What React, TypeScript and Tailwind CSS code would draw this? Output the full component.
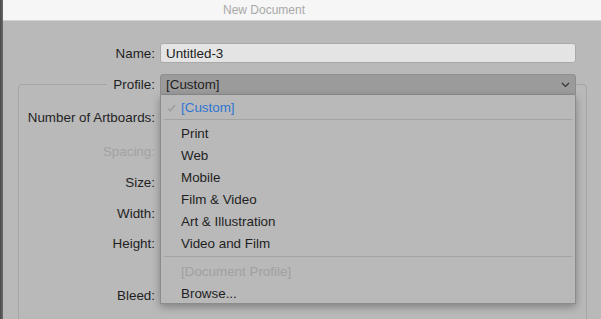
import React from 'react';

const menuItems = ['Print', 'Web', 'Mobile', 'Film & Video', 'Art & Illustration', 'Video and Film'];

const boxRows: { label: string; mt: string; disabled?: boolean }[] = [
  { label: 'Number of Artboards:', mt: 'mt-[22px]' },
  { label: 'Spacing:', mt: 'mt-[14px]', disabled: true },
  { label: 'Size:', mt: 'mt-[11px]' },
  { label: 'Width:', mt: 'mt-[11px]' },
  { label: 'Height:', mt: 'mt-[10px]' },
  { label: 'Bleed:', mt: 'mt-[32px]' },
];

const App: React.FC = () => {
  return (
    <div className="w-[601px] h-[319px] overflow-hidden flex bg-[#b9b9b9] font-['Liberation_Sans',Arial,sans-serif] text-[13.4px] text-[#1f1f1f]">
      {/* window edge */}
      <div className="w-[3px] shrink-0 bg-gradient-to-r from-[#4a4a4a] to-[#6a6a6a]" />

      <div className="flex-1 flex flex-col relative">
        {/* title bar */}
        <div className="h-[21px] shrink-0 bg-[#f6f6f6] border-b border-[#d2d2d2] pl-[220px] text-[12px] leading-[20px] text-[#a8a8a8]">
          New Document
        </div>

        <div className="pt-[22px] flex flex-col">
          {/* Name */}
          <div className="flex items-center h-[20px]">
            <div className="w-[152px] text-right pt-[2px]">Name:</div>
            <div className="ml-[5px] w-[416px] h-[20px] bg-[#e4e4e4] border border-[#a9a9a9] rounded-[3px] pl-[5px] pt-[1px] leading-[18px] text-[#1c1c1c]">
              Untitled-3
            </div>
          </div>

          {/* Profile */}
          <div className="relative z-10 flex items-center h-[21px] mt-[11px]">
            <div className="w-[157px] text-right pt-[1px]">
              <span className="bg-[#b9b9b9] pl-[6px] pr-[5px]">Profile:</span>
            </div>
            <div className="w-[416px] h-[21px] bg-[#9b9b9b] border border-[#8e8e8e] rounded-t-[3px] pl-[5px] pt-[1px] flex items-center justify-between pr-[4px]">
              <span>[Custom]</span>
              <svg width="9" height="6" viewBox="0 0 9 6" className="mr-[1px]">
                <polyline points="1,1 4.5,4.5 8,1" fill="none" stroke="#333" strokeWidth="1.2" />
              </svg>
            </div>
          </div>

          {/* group box */}
          <div className="-mt-[11px] ml-[15px] w-[569px] h-[260px] border border-[#a5a5a5] rounded-[4px] flex flex-col">
            {boxRows.map((r) => (
              <div key={r.label} className={`${r.mt} flex items-center h-[20px] pt-[2px]`}>
                <div className={`w-[136px] text-right ${r.disabled ? 'text-[#a2a2a2]' : ''}`}>{r.label}</div>
              </div>
            ))}
          </div>
        </div>

        {/* dropdown menu */}
        <div className="absolute z-20 left-[157px] top-[95px] w-[416px] bg-[#b9b9b9] border-x border-b border-[#8c8c8c] shadow-[0_3px_8px_rgba(0,0,0,0.3)] pt-[1px] flex flex-col">
          <div className="h-[22px] flex items-center relative pl-[20px] pt-[2px] text-[#2f76d2]">
            <svg width="9" height="8" viewBox="0 0 9 8" className="absolute left-[6px] top-[8px]">
              <polyline points="1,4.5 3.3,7 8,1" fill="none" stroke="#9c9c9c" strokeWidth="1.4" />
            </svg>
            [Custom]
          </div>
          <div className="mt-[1px] mb-[2px] mx-[3px] h-px bg-[#a3a3a3]" />
          {menuItems.map((m) => (
            <div key={m} className="h-[22px] flex items-center pl-[20px] pt-[3px]">
              {m}
            </div>
          ))}
          <div className="mt-[2px] mb-[3px] mx-[3px] h-px bg-[#a3a3a3]" />
          <div className="h-[22px] flex items-center pl-[20px] pt-[3px] text-[#a0a0a0]">[Document Profile]</div>
          <div className="h-[21px] flex items-center pl-[20px] pt-[3px]">Browse...</div>
        </div>
      </div>
    </div>
  );
};

export default App;
